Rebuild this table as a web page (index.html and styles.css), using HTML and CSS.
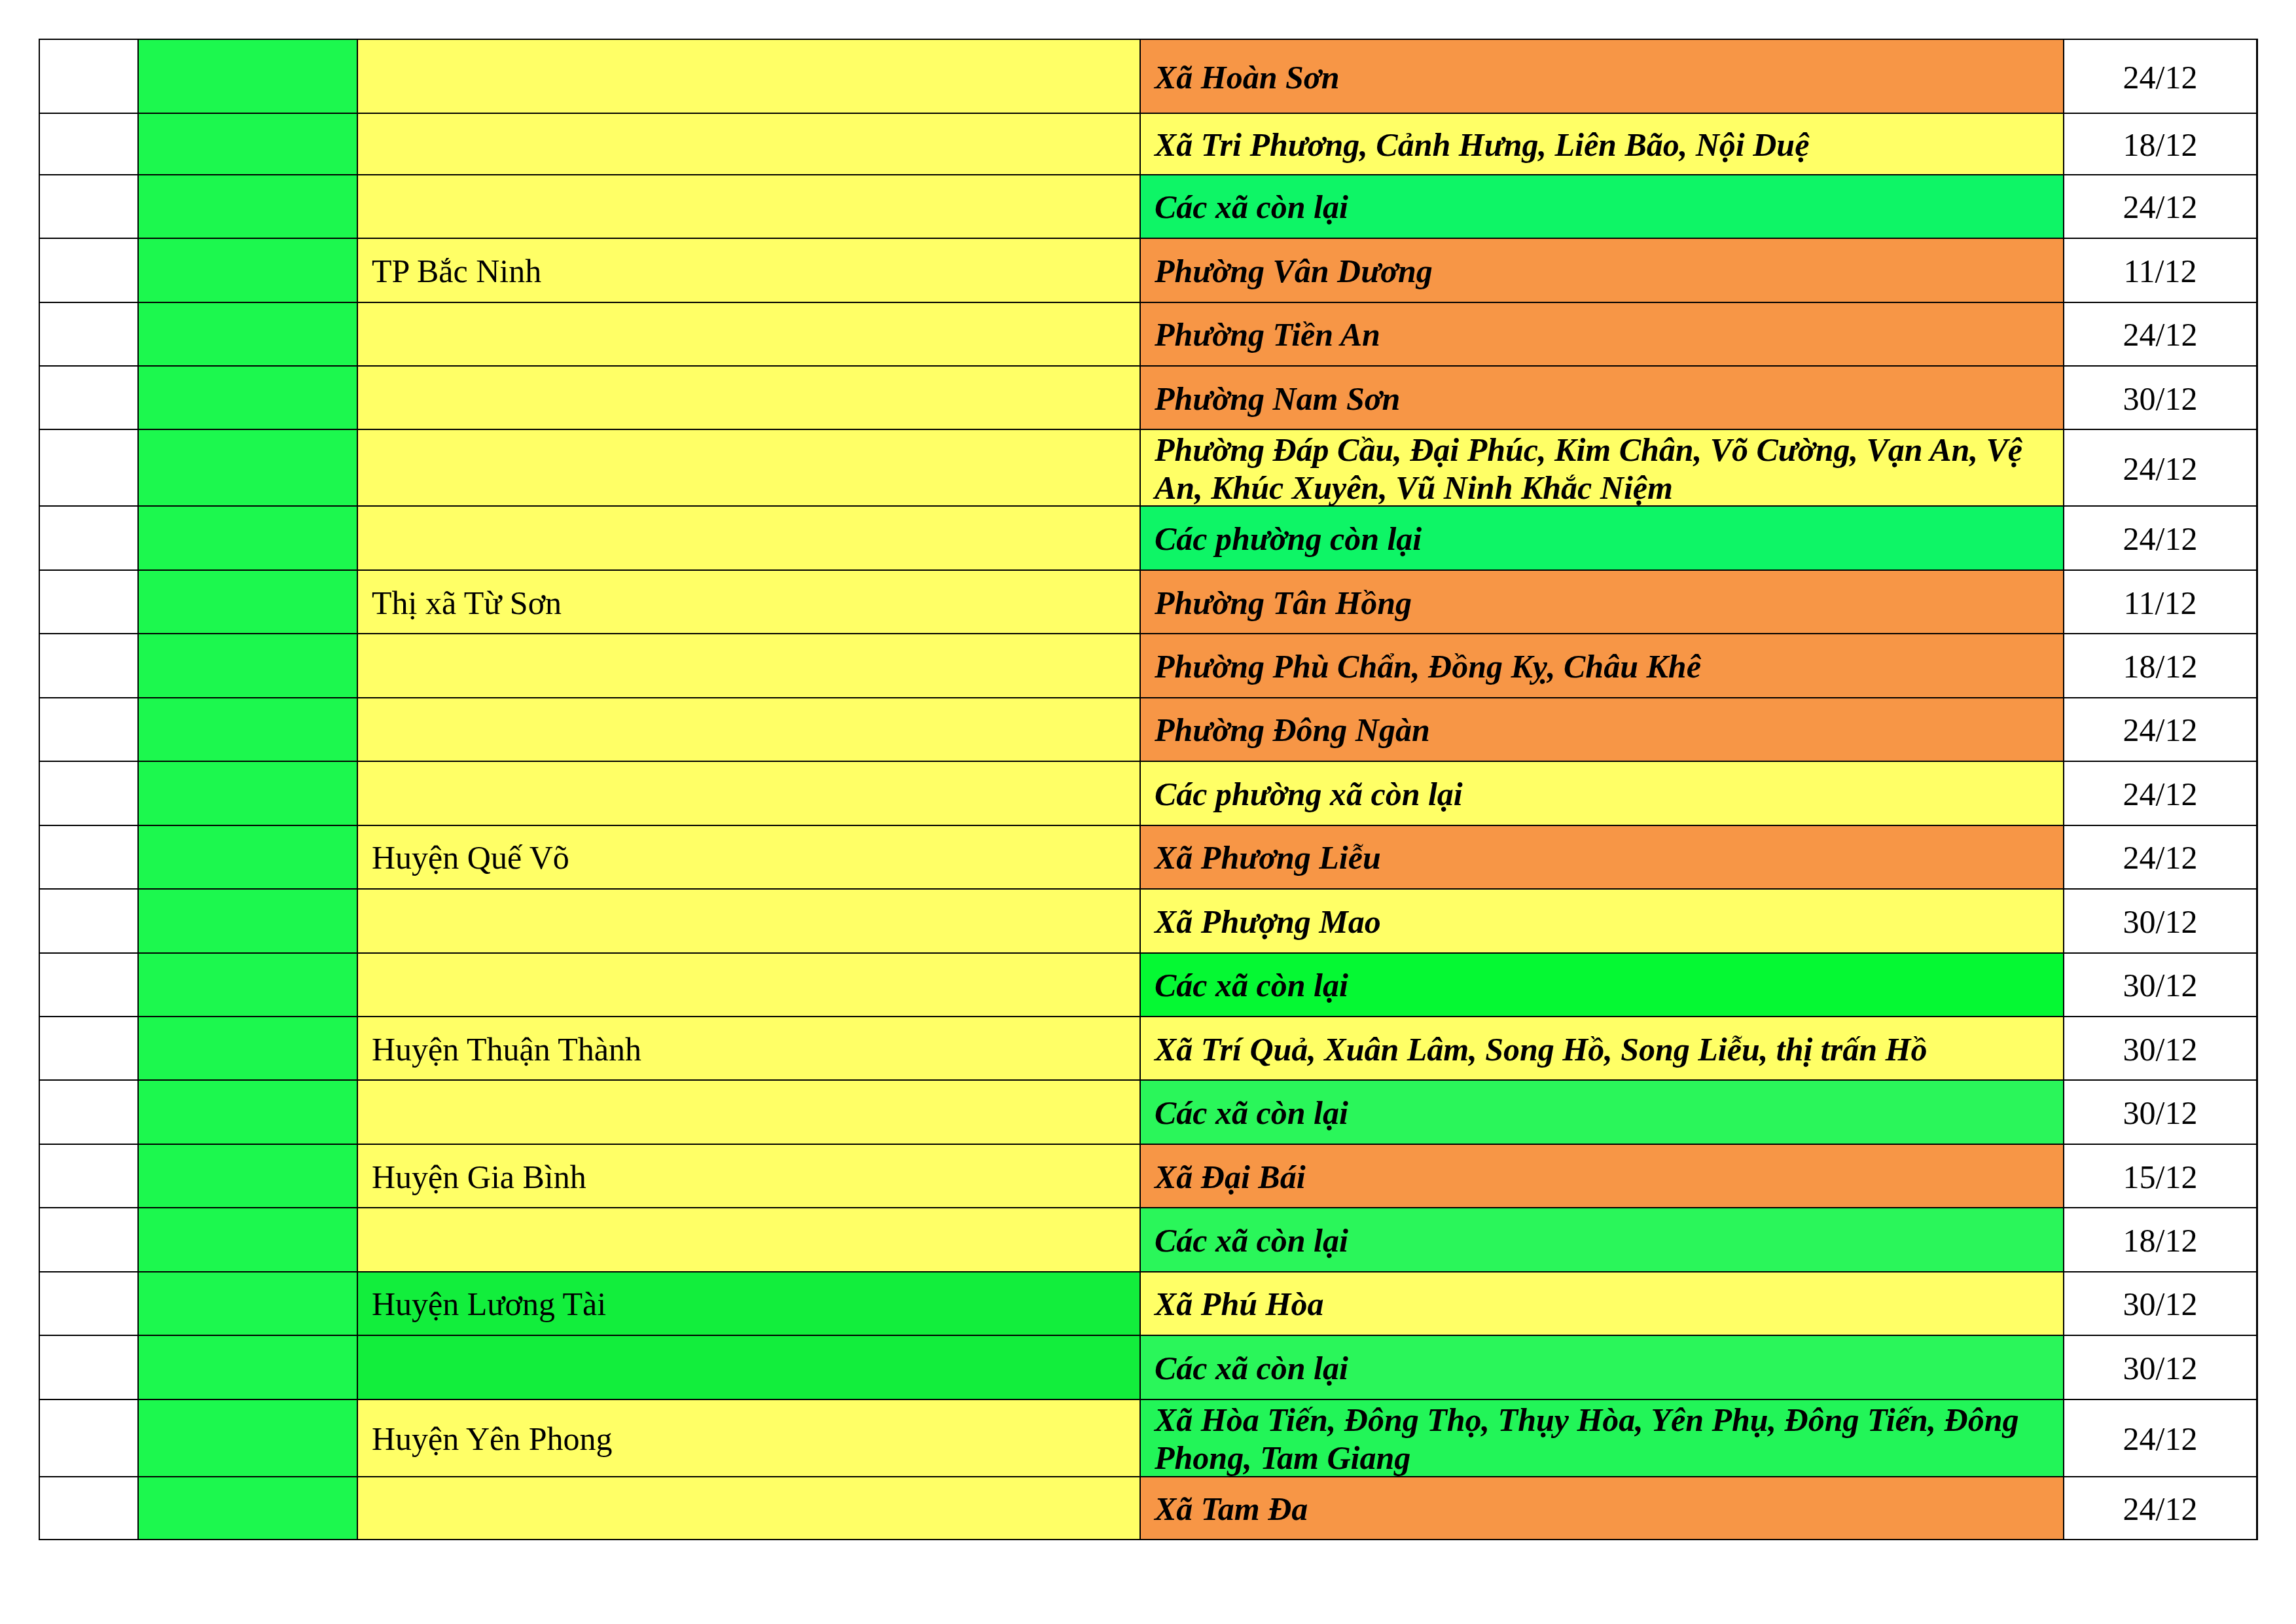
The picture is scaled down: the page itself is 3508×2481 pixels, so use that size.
FILE: index.html
```html
<!DOCTYPE html>
<html lang="vi">
<head>
<meta charset="utf-8">
<title>Lịch</title>
<link rel="stylesheet" href="styles.css">
</head>
<body>
<div class="sheet">
  <div class="c c1"></div><div class="c c2"></div><div class="c c3 y"></div><div class="c c4 o">Xã Hoàn Sơn</div><div class="c c5">24/12</div>
  <div class="c c1"></div><div class="c c2"></div><div class="c c3 y"></div><div class="c c4 y">Xã Tri Phương, Cảnh Hưng, Liên Bão, Nội Duệ</div><div class="c c5">18/12</div>
  <div class="c c1"></div><div class="c c2"></div><div class="c c3 y"></div><div class="c c4 gm">Các xã còn lại</div><div class="c c5">24/12</div>
  <div class="c c1"></div><div class="c c2"></div><div class="c c3 y">TP Bắc Ninh</div><div class="c c4 o">Phường Vân Dương</div><div class="c c5">11/12</div>
  <div class="c c1"></div><div class="c c2"></div><div class="c c3 y"></div><div class="c c4 o">Phường Tiền An</div><div class="c c5">24/12</div>
  <div class="c c1"></div><div class="c c2"></div><div class="c c3 y"></div><div class="c c4 o">Phường Nam Sơn</div><div class="c c5">30/12</div>
  <div class="c c1"></div><div class="c c2"></div><div class="c c3 y"></div><div class="c c4 y">Phường Đáp Cầu, Đại Phúc, Kim Chân, Võ Cường, Vạn An, Vệ<br>An, Khúc Xuyên, Vũ Ninh Khắc Niệm</div><div class="c c5">24/12</div>
  <div class="c c1"></div><div class="c c2"></div><div class="c c3 y"></div><div class="c c4 gm">Các phường còn lại</div><div class="c c5">24/12</div>
  <div class="c c1"></div><div class="c c2"></div><div class="c c3 y">Thị xã Từ Sơn</div><div class="c c4 o">Phường Tân Hồng</div><div class="c c5">11/12</div>
  <div class="c c1"></div><div class="c c2"></div><div class="c c3 y"></div><div class="c c4 o">Phường Phù Chẩn, Đồng Kỵ, Châu Khê</div><div class="c c5">18/12</div>
  <div class="c c1"></div><div class="c c2"></div><div class="c c3 y"></div><div class="c c4 o">Phường Đông Ngàn</div><div class="c c5">24/12</div>
  <div class="c c1"></div><div class="c c2"></div><div class="c c3 y"></div><div class="c c4 y">Các phường xã còn lại</div><div class="c c5">24/12</div>
  <div class="c c1"></div><div class="c c2"></div><div class="c c3 y">Huyện Quế Võ</div><div class="c c4 o">Xã Phương Liễu</div><div class="c c5">24/12</div>
  <div class="c c1"></div><div class="c c2"></div><div class="c c3 y"></div><div class="c c4 y">Xã Phượng Mao</div><div class="c c5">30/12</div>
  <div class="c c1"></div><div class="c c2"></div><div class="c c3 y"></div><div class="c c4 gv">Các xã còn lại</div><div class="c c5">30/12</div>
  <div class="c c1"></div><div class="c c2"></div><div class="c c3 y">Huyện Thuận Thành</div><div class="c c4 y">Xã Trí Quả, Xuân Lâm, Song Hồ, Song Liễu, thị trấn Hồ</div><div class="c c5">30/12</div>
  <div class="c c1"></div><div class="c c2"></div><div class="c c3 y"></div><div class="c c4 gl">Các xã còn lại</div><div class="c c5">30/12</div>
  <div class="c c1"></div><div class="c c2"></div><div class="c c3 y">Huyện Gia Bình</div><div class="c c4 o">Xã Đại Bái</div><div class="c c5">15/12</div>
  <div class="c c1"></div><div class="c c2"></div><div class="c c3 y"></div><div class="c c4 gl">Các xã còn lại</div><div class="c c5">18/12</div>
  <div class="c c1"></div><div class="c c2"></div><div class="c c3 gd">Huyện Lương Tài</div><div class="c c4 y">Xã Phú Hòa</div><div class="c c5">30/12</div>
  <div class="c c1"></div><div class="c c2"></div><div class="c c3 gd"></div><div class="c c4 gl">Các xã còn lại</div><div class="c c5">30/12</div>
  <div class="c c1"></div><div class="c c2"></div><div class="c c3 y">Huyện Yên Phong</div><div class="c c4 gk">Xã Hòa Tiến, Đông Thọ, Thụy Hòa, Yên Phụ, Đông Tiến, Đông<br>Phong, Tam Giang</div><div class="c c5">24/12</div>
  <div class="c c1"></div><div class="c c2"></div><div class="c c3 y"></div><div class="c c4 o">Xã Tam Đa</div><div class="c c5">24/12</div>
</div>
</body>
</html>
```
FILE: styles.css
```css
html, body {
  margin: 0;
  padding: 0;
  background: #ffffff;
}

body {
  font-family: "Liberation Serif", "Times New Roman", serif;
  font-size: 50px;
  color: #000000;
}

.sheet {
  display: grid;
  grid-template-columns: 151px 335px 1196px 1411px 296px;
  grid-template-rows: 113.3px 93.4px repeat(4, 97.45px) 117px repeat(14, 97.45px) 118.3px 96.4px;
  width: max-content;
  margin: 59px 0 0 59px;
  border-top: 2px solid #000;
  border-left: 2px solid #000;
}

.c {
  box-sizing: border-box;
  border-right: 2px solid #000;
  border-bottom: 2px solid #000;
  display: flex;
  align-items: center;
  padding: 2px 20px 0 21px;
  line-height: normal;
  white-space: nowrap;
  overflow: hidden;
}

.c1 { background: #ffffff; }
.c2 { background: #1cf84e; }
.c4 { font-weight: bold; font-style: italic; }
.c5 {
  justify-content: center;
  padding: 2px 0 0 0;
  border-right-width: 3px;
  background: #ffffff;
}

.y  { background: #ffff66; }
.o  { background: #f79646; }
.gm { background: #0ef566; }
.gv { background: #05f933; }
.gl { background: #2af65a; }
.gk { background: #22f558; }
.gd { background: #12ee3c; }
```
